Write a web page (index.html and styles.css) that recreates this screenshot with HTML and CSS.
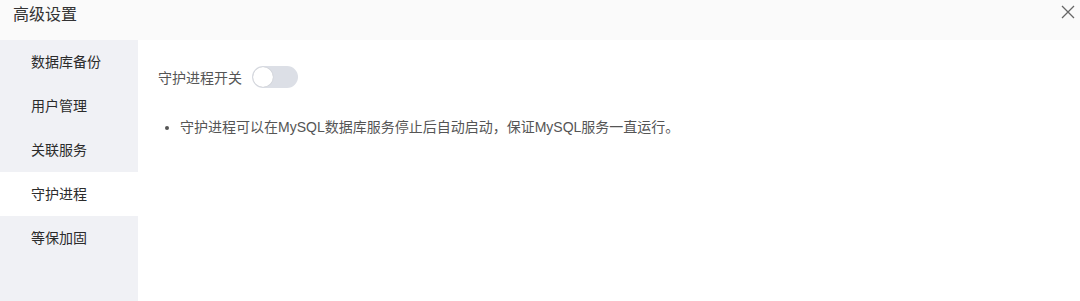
FILE: index.html
```html
<!DOCTYPE html>
<html lang="zh-CN">
<head>
  <meta charset="UTF-8">
  <title>高级设置</title>
  <link rel="stylesheet" href="styles.css">
</head>
<body>

<div class="dialog">
  <div class="header">
    <span class="title">高级设置</span>
    <svg class="close" width="14" height="14" viewBox="0 0 14 14">
      <path d="M1 1 L13 13 M13 1 L1 13" stroke="#666" stroke-width="1.3" fill="none"/>
    </svg>
  </div>

  <div class="body">
    <ul class="menu">
      <li>数据库备份</li>
      <li>用户管理</li>
      <li>关联服务</li>
      <li class="active">守护进程</li>
      <li>等保加固</li>
    </ul>

    <div class="content">
      <div class="row">
        <span class="label">守护进程开关</span>
        <span class="switch"><span class="knob"></span></span>
      </div>
      <ul class="tips">
        <li>守护进程可以在MySQL数据库服务停止后自动启动，保证MySQL服务一直运行。</li>
      </ul>
    </div>
  </div>
</div>

</body>
</html>
```

FILE: styles.css
```css
body {
  margin: 0;
  font-family: "Liberation Sans", "Noto Sans CJK SC", sans-serif;
  color: #333;
  background: white;
}

.dialog {
  width: 1080px;
  height: 301px;
  display: flex;
  flex-direction: column;
}

.header {
  height: 40px;
  background: #fafafa;
  display: flex;
  justify-content: space-between;
  align-items: flex-start;
  padding: 0 5px 0 13px;
}

.title {
  font-size: 16px;
  line-height: 30px;
  color: #333;
}

.close {
  margin-top: 5px;
}

.body {
  flex: 1;
  display: flex;
}

.menu {
  list-style: none;
  margin: 0;
  padding: 0;
  width: 138px;
  background: #f0f1f5;
}

.menu li {
  height: 44px;
  line-height: 44px;
  padding-left: 31px;
  font-size: 14px;
  color: #2b2b2b;
}

.menu li.active {
  background: white;
}

.content {
  flex: 1;
  padding: 24px 0 0 20px;
}

.row {
  display: flex;
  align-items: center;
  height: 26px;
}

.label {
  font-size: 14px;
  color: #555;
  margin-right: 10px;
}

.switch {
  width: 46px;
  height: 22px;
  border-radius: 11px;
  background: #dcdfe6;
  display: flex;
  align-items: center;
  padding: 0 1px;
  box-sizing: border-box;
}

.knob {
  width: 20px;
  height: 20px;
  border-radius: 50%;
  background: white;
  box-shadow: 0 0 1px rgba(0, 0, 0, 0.25);
}

.tips {
  margin: 27px 0 0;
  padding-left: 22px;
  font-size: 14px;
  color: #555;
}

.tips li {
  line-height: 20px;
}
```
